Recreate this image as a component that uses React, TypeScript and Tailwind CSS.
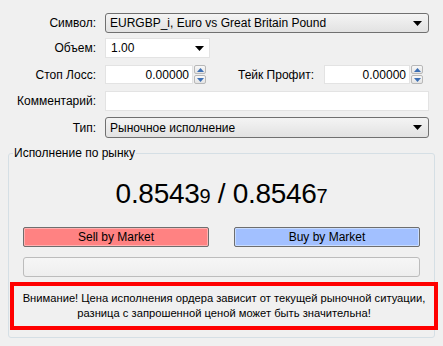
import React from 'react';

const font = { fontFamily: '"Liberation Sans", Arial, sans-serif' };

function Arrow() {
  return (
    <svg width="9" height="5" viewBox="0 0 9 5" className="shrink-0">
      <path d="M0 0H9L4.5 5Z" fill="#000" />
    </svg>
  );
}

function Spinner() {
  return (
    <div className="flex flex-col w-[12px] h-[19px] ml-[1px] gap-[1px]">
      <div className="flex-1 flex items-center justify-center border border-[#b8b8b8] rounded-[2px] bg-gradient-to-b from-[#f8f8f8] to-[#e4e4e4]">
        <svg width="7" height="4" viewBox="0 0 7 4"><path d="M0 4H7L3.5 0Z" fill="#3c6fb4" /></svg>
      </div>
      <div className="flex-1 flex items-center justify-center border border-[#b8b8b8] rounded-[2px] bg-gradient-to-b from-[#f8f8f8] to-[#e4e4e4]">
        <svg width="7" height="4" viewBox="0 0 7 4"><path d="M0 0H7L3.5 4Z" fill="#3c6fb4" /></svg>
      </div>
    </div>
  );
}

function Label({ children }: { children: React.ReactNode }) {
  return <div className="w-[97px] shrink-0 text-right pr-[1px]">{children}</div>;
}

export default function App() {
  return (
    <div className="w-[443px] h-[346px] bg-[#f0f0f0] text-[12px] text-black overflow-hidden" style={font}>
      <div className="flex flex-col pt-[13px]">
        {/* Символ */}
        <div className="flex items-center gap-[8px] h-[20px]">
          <Label>Символ:</Label>
          <div className="w-[324px] h-[20px] flex items-center justify-between pl-[4px] pr-[6px] border border-[#707070] rounded-[3px] bg-gradient-to-b from-[#f4f4f4] to-[#e2e2e2]">
            <span>EURGBP_i, Euro vs Great Britain Pound</span>
            <Arrow />
          </div>
        </div>

        {/* Объем */}
        <div className="flex items-center gap-[8px] h-[20px] mt-[5px]">
          <Label>Объем:</Label>
          <div className="w-[105px] h-[20px] flex items-center justify-between pl-[5px] pr-[5px] border border-[#e3e3e3] bg-white">
            <span>1.00</span>
            <Arrow />
          </div>
        </div>

        {/* Стоп Лосс / Тейк Профит */}
        <div className="flex items-center gap-[8px] h-[19px] mt-[7px]">
          <Label>Стоп Лосс:</Label>
          <div className="flex items-center">
            <div className="w-[88px] h-[19px] flex items-center justify-end pr-[3px] border border-[#e3e3e3] bg-white">0.00000</div>
            <Spinner />
          </div>
          <div className="w-[102px] shrink-0 text-right pr-[2px]">Тейк Профит:</div>
          <div className="flex items-center">
            <div className="w-[86px] h-[19px] flex items-center justify-end pr-[3px] border border-[#e3e3e3] bg-white">0.00000</div>
            <Spinner />
          </div>
        </div>

        {/* Комментарий */}
        <div className="flex items-center gap-[8px] h-[20px] mt-[7px]">
          <Label>Комментарий:</Label>
          <div className="w-[324px] h-[20px] border border-[#e3e3e3] bg-white" />
        </div>

        {/* Тип */}
        <div className="flex items-center gap-[8px] h-[21px] mt-[6px]">
          <Label>Тип:</Label>
          <div className="w-[324px] h-[21px] flex items-center justify-between pl-[4px] pr-[6px] border border-[#707070] rounded-[3px] bg-gradient-to-b from-[#f4f4f4] to-[#e2e2e2]">
            <span>Рыночное исполнение</span>
            <Arrow />
          </div>
        </div>

        {/* Исполнение по рынку */}
        <fieldset className="ml-[8px] w-[427px] mt-[8px] border border-[#d5dfe5] rounded-[3px] pb-[7px]">
          <legend className="ml-[4px] px-[1px] leading-[14px]">Исполнение по рынку</legend>

          <div className="flex items-baseline justify-center mt-[14px] h-[40px] text-[28px] leading-[40px] tracking-[-0.3px]">
            <span>0.8543</span>
            <span className="text-[20px]">9</span>
            <span>&nbsp;/&nbsp;0.8546</span>
            <span className="text-[20px]">7</span>
          </div>

          <div className="flex justify-between ml-[14px] mr-[14px] mt-[13px]">
            <button className="w-[186px] h-[20px] flex items-center justify-center border border-[#6e6e6e] rounded-[2px] bg-[#ff8282] shadow-[inset_0_0_0_1px_#ffb0b0]">
              Sell by Market
            </button>
            <button className="w-[186px] h-[20px] flex items-center justify-center border border-[#6e6e6e] rounded-[2px] bg-[#a2c0ff] shadow-[inset_0_0_0_1px_#c8dcff]">
              Buy by Market
            </button>
          </div>

          <div className="ml-[14px] mr-[14px] mt-[10px] h-[20px] border border-[#bcbcbc] rounded-[3px] bg-gradient-to-b from-[#f6f6f6] to-[#eeeeee]" />

          <div className="ml-[1px] -mr-[4px] mt-[5px] h-[48px] border-[4px] border-[#ff0000] flex flex-col items-center justify-center leading-[15px] text-[11.2px]">
            <span>Внимание! Цена исполнения ордера зависит от текущей рыночной ситуации,</span>
            <span>разница с запрошенной ценой может быть значительна!</span>
          </div>
        </fieldset>
      </div>
    </div>
  );
}
